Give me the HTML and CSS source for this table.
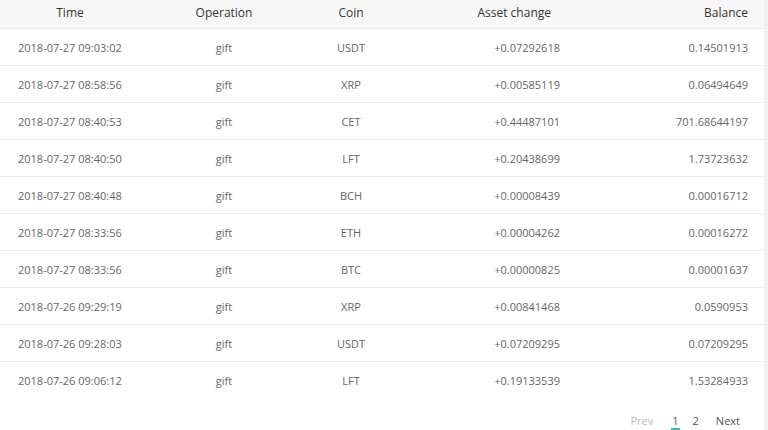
FILE: index.html
```html
<!DOCTYPE html>
<html>
<head>
<meta charset="utf-8">
<link rel="stylesheet" href="styles.css">
</head>
<body>
<div class="page">
  <div class="main">
    <div class="table">
      <div class="row head">
        <div class="c-time">Time</div>
        <div class="c-op">Operation</div>
        <div class="c-coin">Coin</div>
        <div class="c-asset">Asset change</div>
        <div class="c-bal">Balance</div>
      </div>
      <div class="row"><div class="c-time">2018-07-27 09:03:02</div><div class="c-op">gift</div><div class="c-coin">USDT</div><div class="c-asset">+0.07292618</div><div class="c-bal">0.14501913</div></div>
      <div class="row"><div class="c-time">2018-07-27 08:58:56</div><div class="c-op">gift</div><div class="c-coin">XRP</div><div class="c-asset">+0.00585119</div><div class="c-bal">0.06494649</div></div>
      <div class="row"><div class="c-time">2018-07-27 08:40:53</div><div class="c-op">gift</div><div class="c-coin">CET</div><div class="c-asset">+0.44487101</div><div class="c-bal">701.68644197</div></div>
      <div class="row"><div class="c-time">2018-07-27 08:40:50</div><div class="c-op">gift</div><div class="c-coin">LFT</div><div class="c-asset">+0.20438699</div><div class="c-bal">1.73723632</div></div>
      <div class="row"><div class="c-time">2018-07-27 08:40:48</div><div class="c-op">gift</div><div class="c-coin">BCH</div><div class="c-asset">+0.00008439</div><div class="c-bal">0.00016712</div></div>
      <div class="row"><div class="c-time">2018-07-27 08:33:56</div><div class="c-op">gift</div><div class="c-coin">ETH</div><div class="c-asset">+0.00004262</div><div class="c-bal">0.00016272</div></div>
      <div class="row"><div class="c-time">2018-07-27 08:33:56</div><div class="c-op">gift</div><div class="c-coin">BTC</div><div class="c-asset">+0.00000825</div><div class="c-bal">0.00001637</div></div>
      <div class="row"><div class="c-time">2018-07-26 09:29:19</div><div class="c-op">gift</div><div class="c-coin">XRP</div><div class="c-asset">+0.00841468</div><div class="c-bal">0.0590953</div></div>
      <div class="row"><div class="c-time">2018-07-26 09:28:03</div><div class="c-op">gift</div><div class="c-coin">USDT</div><div class="c-asset">+0.07209295</div><div class="c-bal">0.07209295</div></div>
      <div class="row last"><div class="c-time">2018-07-26 09:06:12</div><div class="c-op">gift</div><div class="c-coin">LFT</div><div class="c-asset">+0.19133539</div><div class="c-bal">1.53284933</div></div>
    </div>
    <div class="pager">
      <span class="prev">Prev</span>
      <span class="num active">1</span>
      <span class="num">2</span>
      <span class="next">Next</span>
    </div>
  </div>
  <div class="strip"></div>
</div>
</body>
</html>
```

FILE: styles.css
```css
html, body {
  margin: 0;
  padding: 0;
  background: #fff;
}
body {
  font-family: "Open Sans", "Noto Sans", sans-serif;
  width: 768px;
  height: 430px;
  overflow: hidden;
}
.page {
  display: flex;
  height: 430px;
}
.main {
  width: 764px;
  display: flex;
  flex-direction: column;
}
.strip {
  width: 4px;
  background: #f1f1f1;
}
.row {
  display: grid;
  grid-template-columns: 140px 168px 86px 166px 204px;
  align-items: center;
  height: 36px;
  border-bottom: 1px solid #ececec;
  font-size: 11px;
  color: #666;
}
.row.last {
  border-bottom: none;
}
.row.head {
  height: 24px;
  padding-bottom: 4px;
  background: #f7f7f7;
  color: #333;
  font-size: 12px;
  border-bottom: 1px solid #e6e6e6;
}
.c-time {
  padding-left: 18px;
}
.head .c-time {
  padding-left: 0;
  text-align: center;
}
.c-op, .c-coin {
  text-align: center;
}
.c-asset {
  text-align: right;
}
.head .c-asset {
  padding-right: 9px;
}
.c-bal {
  text-align: right;
  padding-right: 16px;
}
.pager {
  display: flex;
  justify-content: flex-end;
  align-items: center;
  padding: 15px 24px 0 0;
  font-size: 11px;
  color: #555;
}
.pager span {
  position: relative;
  line-height: 16px;
}
.prev {
  color: #bbb;
  margin-right: 19px;
}
.num {
  margin-right: 14px;
}
.num + .num {
  margin-right: 17px;
}
.num.active::after {
  content: "";
  position: absolute;
  left: -1px;
  right: -1px;
  bottom: -1px;
  height: 2px;
  background: #2bc4b1;
}
```
